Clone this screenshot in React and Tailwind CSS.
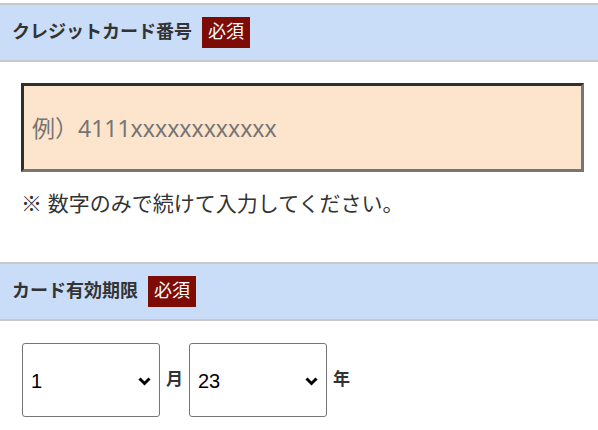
const jp = { fontFamily: '"Liberation Sans", "Noto Sans CJK JP", sans-serif' };
const wide = { fontFamily: '"Noto Sans", "Noto Sans CJK JP", sans-serif' };

function SectionHeader({ title }) {
  return (
    <div className="flex h-[59px] items-center gap-[10px] border-y-2 border-[#c8c8c8] bg-[#c9dcf8] pl-[12px]">
      <h2 className="text-[18px] font-bold text-[#333]">{title}</h2>
      <span className="flex h-[31px] items-center bg-[#7d0c07] px-[6px] text-[18px] text-white">必須</span>
    </div>
  );
}

function Select({ value, options, width }) {
  return (
    <div className={`relative ${width}`}>
      <select
        defaultValue={value}
        className="h-[74px] w-full appearance-none rounded-[3px] border border-[#767676] bg-white pl-[8px] pt-[2px] text-[20px] text-black outline-none"
      >
        {options.map((o) => (
          <option key={o} value={o}>{o}</option>
        ))}
      </select>
      <svg className="pointer-events-none absolute right-[9px] top-[34px]" width="13" height="9" viewBox="0 0 13 9">
        <path d="M1.5 1.5 L6.5 6.5 L11.5 1.5" fill="none" stroke="#000" strokeWidth="3" />
      </svg>
    </div>
  );
}

export default function App() {
  const months = Array.from({ length: 12 }, (_, i) => String(i + 1));
  const years = Array.from({ length: 11 }, (_, i) => String(23 + i));

  return (
    <div className="min-h-[430px] w-[598px] bg-white pt-[3px]" style={jp}>
      <SectionHeader title="クレジットカード番号" />

      <div className="px-[21px] pt-[21px]">
        <input
          type="text"
          placeholder="例）4111xxxxxxxxxxxx"
          style={wide}
          className="h-[89px] w-[563px] border-[3px] border-b-[#767676] border-l-[#2f2f2f] border-r-[#767676] border-t-[#2f2f2f] bg-[#fde5cd] pl-[8px] text-[23px] text-[#333] outline-none placeholder:text-[#757575]"
        />
        <p className="mt-[17px] text-[21px] leading-[30px] text-[#333]">※ 数字のみで続けて入力してください。</p>
      </div>

      <div className="mt-[43px]">
        <SectionHeader title="カード有効期限" />
      </div>

      <div className="flex items-center gap-[6px] pl-[22px] pt-[22px]">
        <Select value="1" options={months} width="w-[138px]" />
        <span className="text-[17px] font-bold text-[#333]">月</span>
        <Select value="23" options={years} width="w-[138px]" />
        <span className="text-[17px] font-bold text-[#333]">年</span>
      </div>
    </div>
  );
}
